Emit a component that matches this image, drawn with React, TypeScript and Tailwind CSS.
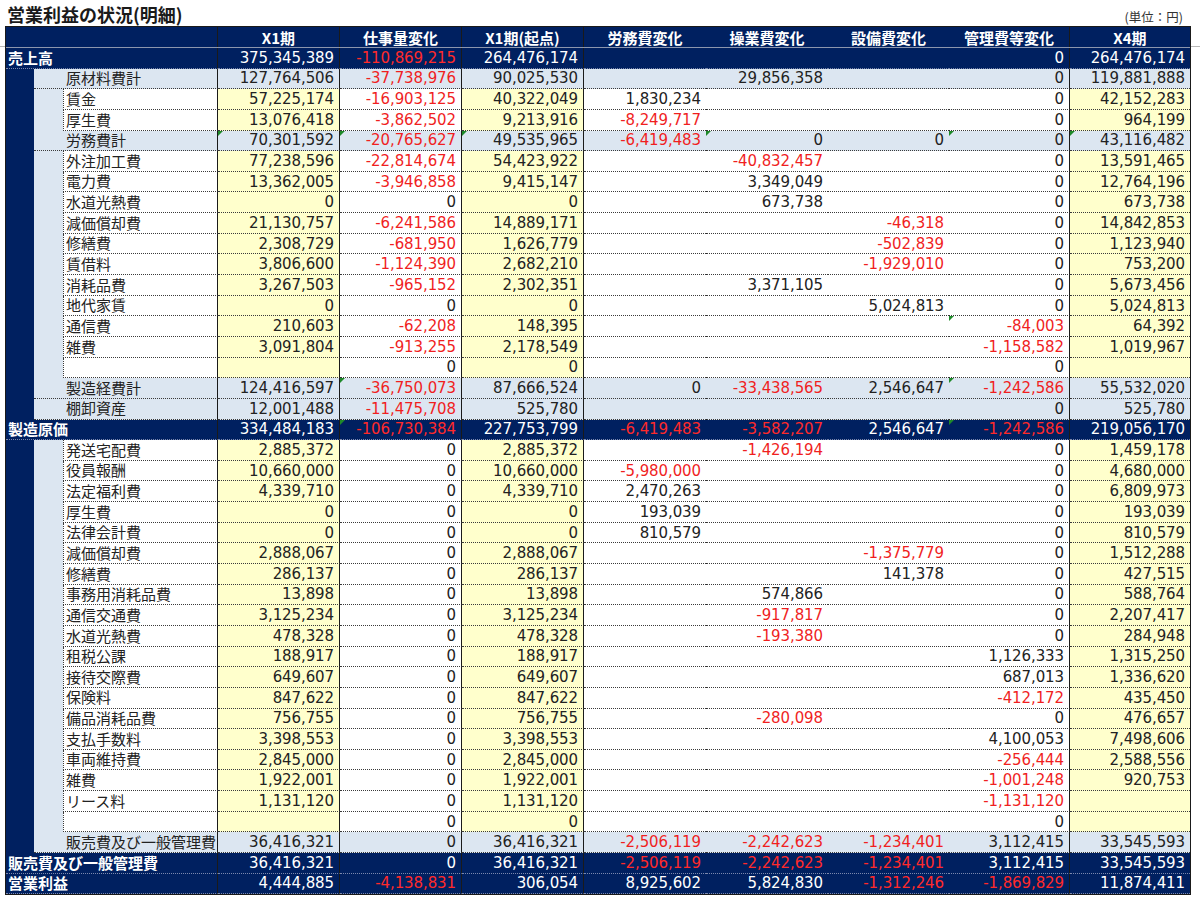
import React from "react";

type Kind = "main" | "sub" | "detail";
type Row = { k: Kind; label: string; v: string[]; tri?: number[] };

const rows: Row[] = [
  { k: "main", label: "売上高", v: ["375,345,389", "-110,869,215", "264,476,174", "", "", "", "0", "264,476,174"] },
  { k: "sub", label: "原材料費計", v: ["127,764,506", "-37,738,976", "90,025,530", "", "29,856,358", "", "0", "119,881,888"] },
  { k: "detail", label: "賃金", v: ["57,225,174", "-16,903,125", "40,322,049", "1,830,234", "", "", "0", "42,152,283"] },
  { k: "detail", label: "厚生費", v: ["13,076,418", "-3,862,502", "9,213,916", "-8,249,717", "", "", "0", "964,199"] },
  { k: "sub", label: "労務費計", v: ["70,301,592", "-20,765,627", "49,535,965", "-6,419,483", "0", "0", "0", "43,116,482"], tri: [0, 1, 2, 4, 6, 7] },
  { k: "detail", label: "外注加工費", v: ["77,238,596", "-22,814,674", "54,423,922", "", "-40,832,457", "", "0", "13,591,465"] },
  { k: "detail", label: "電力費", v: ["13,362,005", "-3,946,858", "9,415,147", "", "3,349,049", "", "0", "12,764,196"] },
  { k: "detail", label: "水道光熱費", v: ["0", "0", "0", "", "673,738", "", "0", "673,738"] },
  { k: "detail", label: "減価償却費", v: ["21,130,757", "-6,241,586", "14,889,171", "", "", "-46,318", "0", "14,842,853"] },
  { k: "detail", label: "修繕費", v: ["2,308,729", "-681,950", "1,626,779", "", "", "-502,839", "0", "1,123,940"] },
  { k: "detail", label: "賃借料", v: ["3,806,600", "-1,124,390", "2,682,210", "", "", "-1,929,010", "0", "753,200"] },
  { k: "detail", label: "消耗品費", v: ["3,267,503", "-965,152", "2,302,351", "", "3,371,105", "", "0", "5,673,456"] },
  { k: "detail", label: "地代家賃", v: ["0", "0", "0", "", "", "5,024,813", "0", "5,024,813"] },
  { k: "detail", label: "通信費", v: ["210,603", "-62,208", "148,395", "", "", "", "-84,003", "64,392"], tri: [6] },
  { k: "detail", label: "雑費", v: ["3,091,804", "-913,255", "2,178,549", "", "", "", "-1,158,582", "1,019,967"] },
  { k: "detail", label: "", v: ["", "0", "0", "", "", "", "0", ""] },
  { k: "sub", label: "製造経費計", v: ["124,416,597", "-36,750,073", "87,666,524", "0", "-33,438,565", "2,546,647", "-1,242,586", "55,532,020"], tri: [1, 6] },
  { k: "sub", label: "棚卸資産", v: ["12,001,488", "-11,475,708", "525,780", "", "", "", "0", "525,780"] },
  { k: "main", label: "製造原価", v: ["334,484,183", "-106,730,384", "227,753,799", "-6,419,483", "-3,582,207", "2,546,647", "-1,242,586", "219,056,170"], tri: [1, 6] },
  { k: "detail", label: "発送宅配費", v: ["2,885,372", "0", "2,885,372", "", "-1,426,194", "", "0", "1,459,178"] },
  { k: "detail", label: "役員報酬", v: ["10,660,000", "0", "10,660,000", "-5,980,000", "", "", "0", "4,680,000"] },
  { k: "detail", label: "法定福利費", v: ["4,339,710", "0", "4,339,710", "2,470,263", "", "", "0", "6,809,973"] },
  { k: "detail", label: "厚生費", v: ["0", "0", "0", "193,039", "", "", "0", "193,039"] },
  { k: "detail", label: "法律会計費", v: ["0", "0", "0", "810,579", "", "", "0", "810,579"] },
  { k: "detail", label: "減価償却費", v: ["2,888,067", "0", "2,888,067", "", "", "-1,375,779", "0", "1,512,288"] },
  { k: "detail", label: "修繕費", v: ["286,137", "0", "286,137", "", "", "141,378", "0", "427,515"] },
  { k: "detail", label: "事務用消耗品費", v: ["13,898", "0", "13,898", "", "574,866", "", "0", "588,764"] },
  { k: "detail", label: "通信交通費", v: ["3,125,234", "0", "3,125,234", "", "-917,817", "", "0", "2,207,417"] },
  { k: "detail", label: "水道光熱費", v: ["478,328", "0", "478,328", "", "-193,380", "", "0", "284,948"] },
  { k: "detail", label: "租税公課", v: ["188,917", "0", "188,917", "", "", "", "1,126,333", "1,315,250"] },
  { k: "detail", label: "接待交際費", v: ["649,607", "0", "649,607", "", "", "", "687,013", "1,336,620"] },
  { k: "detail", label: "保険料", v: ["847,622", "0", "847,622", "", "", "", "-412,172", "435,450"] },
  { k: "detail", label: "備品消耗品費", v: ["756,755", "0", "756,755", "", "-280,098", "", "0", "476,657"] },
  { k: "detail", label: "支払手数料", v: ["3,398,553", "0", "3,398,553", "", "", "", "4,100,053", "7,498,606"] },
  { k: "detail", label: "車両維持費", v: ["2,845,000", "0", "2,845,000", "", "", "", "-256,444", "2,588,556"] },
  { k: "detail", label: "雑費", v: ["1,922,001", "0", "1,922,001", "", "", "", "-1,001,248", "920,753"] },
  { k: "detail", label: "リース料", v: ["1,131,120", "0", "1,131,120", "", "", "", "-1,131,120", ""] },
  { k: "detail", label: "", v: ["", "0", "0", "", "", "", "0", ""] },
  { k: "sub", label: "販売費及び一般管理費", v: ["36,416,321", "0", "36,416,321", "-2,506,119", "-2,242,623", "-1,234,401", "3,112,415", "33,545,593"] },
  { k: "main", label: "販売費及び一般管理費", v: ["36,416,321", "0", "36,416,321", "-2,506,119", "-2,242,623", "-1,234,401", "3,112,415", "33,545,593"] },
  { k: "main", label: "営業利益", v: ["4,444,885", "-4,138,831", "306,054", "8,925,602", "5,824,830", "-1,312,246", "-1,869,829", "11,874,411"] },
];

const heads = ["X1期", "仕事量変化", "X1期(起点)", "労務費変化", "操業費変化", "設備費変化", "管理費等変化", "X4期"];

// width / right rule / yellow input column
const cols = [
  { w: "w-[122px]", line: "border-r border-r-[#1a1a1a]", yellow: true },
  { w: "w-[122px]", line: "border-r border-r-[#1a1a1a]", yellow: false },
  { w: "w-[122px]", line: "border-r border-r-[#1a1a1a]", yellow: true },
  { w: "w-[122px]", line: "", yellow: false },
  { w: "w-[122px]", line: "", yellow: false },
  { w: "w-[121px]", line: "", yellow: false },
  { w: "w-[121px]", line: "border-r border-r-[#1a1a1a]", yellow: false },
  { w: "w-[120px]", line: "", yellow: true },
];

const num = "font-['DejaVu_Sans',sans-serif] text-[15px] leading-none tracking-[-0.1px]";

function Tri() {
  return (
    <span className="absolute left-0 top-0 h-0 w-0 border-t-[5px] border-r-[5px] border-t-[#1f8a2a] border-r-transparent" />
  );
}

function Cell({ row, i }: { row: Row; i: number }) {
  const c = cols[i];
  const val = row.v[i];
  const neg = val.startsWith("-");
  let bg = "bg-white";
  if (row.k === "main") bg = "bg-[#002060]";
  else if (row.k === "sub") bg = "bg-[#dce6f1]";
  else if (c.yellow) bg = "bg-[#ffffcc]";
  let color = "text-[#222]";
  if (neg) color = row.k === "main" ? "text-[#ff2a2a]" : "text-[#f01f1f]";
  else if (row.k === "main") color = "text-white";
  const rule = row.k === "main" ? "[border-bottom:1px_dotted_#7b88ad]" : "[border-bottom:1px_dotted_#3a3a3a]";
  return (
    <div className={`relative flex h-full shrink-0 items-center justify-end pr-[5px] pt-[1px] ${c.w} ${c.line} ${bg} ${rule}`}>
      {row.tri?.includes(i) && <Tri />}
      <span className={`${num} ${color}`}>{val}</span>
    </div>
  );
}

function Label({ row }: { row: Row }) {
  if (row.k === "main") {
    return (
      <div className="flex h-full w-[212px] shrink-0 items-center border-r border-r-[#1a1a1a] bg-[#002060] pl-[2px] text-[15px] font-bold text-white [border-bottom:1px_dotted_#7b88ad]">
        {row.label}
      </div>
    );
  }
  if (row.k === "sub") {
    return (
      <>
        <div className="h-full w-[28px] shrink-0 bg-[#002060]" />
        <div className="flex h-full w-[184px] shrink-0 items-center border-r border-r-[#1a1a1a] bg-[#dce6f1] pl-[32px] text-[15px] text-[#222] [border-bottom:1px_dotted_#3a3a3a]">
          {row.label}
        </div>
      </>
    );
  }
  return (
    <>
      <div className="h-full w-[28px] shrink-0 bg-[#002060]" />
      <div className="h-full w-[29px] shrink-0 bg-[#dce6f1]" />
      <div className="flex h-full w-[155px] shrink-0 items-center whitespace-nowrap border-r border-r-[#1a1a1a] bg-white pl-[2px] text-[15px] text-[#222] [border-bottom:1px_dotted_#3a3a3a] [border-left:1px_dotted_#3a3a3a]">
        {row.label}
      </div>
    </>
  );
}

export default function App() {
  return (
    <div className="h-[907px] w-[1200px] bg-white font-['Noto_Sans_CJK_JP',sans-serif]">
      {/* title */}
      <div className="flex h-[26px] items-end justify-between pl-[7px] pr-[17px]">
        <h1 className="text-[18px] font-bold leading-[24px] text-[#1a1a1a]">営業利益の状況(明細)</h1>
        <span className="pb-[3px] text-[12.5px] leading-none text-[#333]">(単位：円)</span>
      </div>

      <div className="flex">
        <div className="h-[21px] w-[5px] border-b border-b-[#b8b8b8]" />
        <div className="w-[1186px] border border-[#1a1a1a]">
          {/* header */}
          <div className="flex h-[21px] border-b border-b-[#8c96ad] bg-[#002060] text-[15px] font-bold text-white">
            <div className="w-[212px] shrink-0 border-r border-r-[#1a1a1a]" />
            {heads.map((h, i) => (
              <div
                key={h}
                className={`flex h-full shrink-0 items-center justify-center leading-none ${cols[i].w} ${cols[i].line}`}
              >
                {h}
              </div>
            ))}
          </div>
          {rows.map((r, ri) => (
            <div key={ri} className="flex h-[20.65px]">
              <Label row={r} />
              {cols.map((_, i) => (
                <Cell key={i} row={r} i={i} />
              ))}
            </div>
          ))}
        </div>
        <div className="h-[21px] flex-1 border-b border-b-[#b8b8b8]" />
      </div>
    </div>
  );
}
